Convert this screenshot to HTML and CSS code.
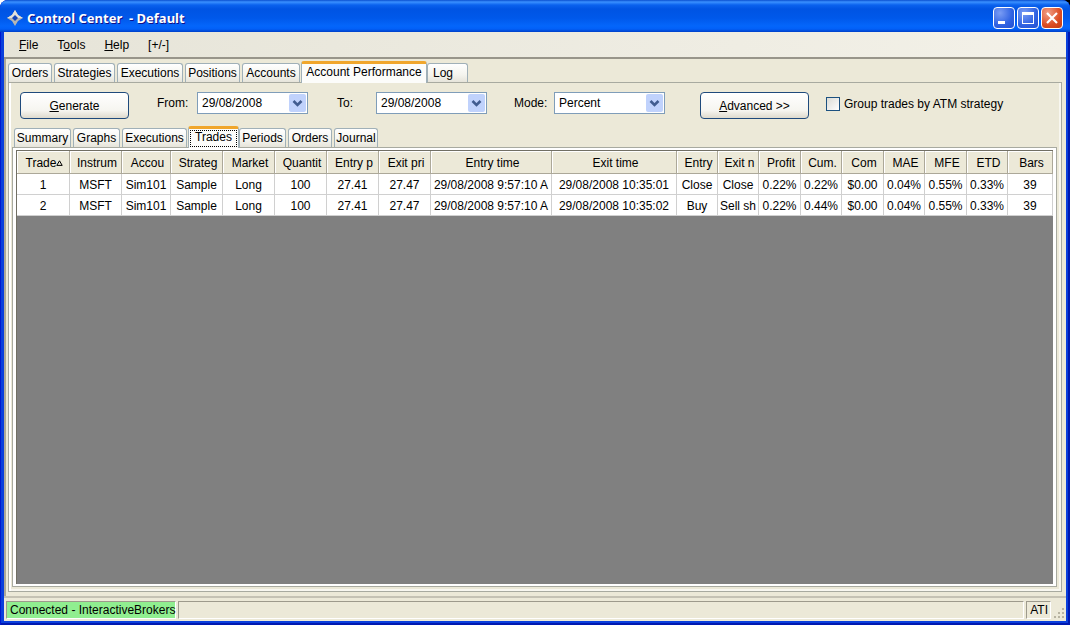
FILE: index.html
```html
<!DOCTYPE html>
<html lang="en">
<head>
    <meta charset="UTF-8">
    <meta name="viewport" content="width=device-width, initial-scale=1.0">
    <title>Control Center - Default</title>
    <link rel="stylesheet" href="styles.css">
</head>
<body>
    <div class="window">
        <header class="titlebar">
            <svg class="logo" width="16" height="16" viewBox="0 0 16 16">
                <path d="M8 0 L11 5 L16 8 L11 11 L8 16 L5 11 L0 8 L5 5 Z" fill="#b4b6b4"/>
                <path d="M8 0 L11 5 L16 8 L8 8 L0 8 L5 5 Z" fill="#e2e2dc"/>
                <path d="M8 5 L11 8 L8 11 L5 8 Z" fill="#1546b8"/>
            </svg>
            <h1>Control Center&nbsp; - Default</h1>
            <div class="window-buttons">
                <button type="button" class="win-btn" aria-label="Minimize">
                    <svg width="20" height="20" viewBox="0 0 20 20"><path d="M4 13h7v3H4z" fill="#fff"/></svg>
                </button>
                <button type="button" class="win-btn" aria-label="Maximize">
                    <svg width="20" height="20" viewBox="0 0 20 20"><path d="M4 4h12v12H4zM5 7v8h10V7z" fill="#fff" fill-rule="evenodd"/></svg>
                </button>
                <button type="button" class="win-btn close" aria-label="Close">
                    <svg width="20" height="20" viewBox="0 0 20 20"><path d="M5 5l10 10M15 5L5 15" stroke="#fff" stroke-width="2.2"/></svg>
                </button>
            </div>
        </header>

        <div class="client">
            <nav class="menubar">
                <button type="button"><u>F</u>ile</button>
                <button type="button">T<u>o</u>ols</button>
                <button type="button"><u>H</u>elp</button>
                <button type="button">[+/-]</button>
            </nav>

            <main class="workspace">
                <div class="tabs main-tabs" role="tablist">
                    <button type="button" role="tab" class="tab">Orders</button>
                    <button type="button" role="tab" class="tab">Strategies</button>
                    <button type="button" role="tab" class="tab">Executions</button>
                    <button type="button" role="tab" class="tab">Positions</button>
                    <button type="button" role="tab" class="tab">Accounts</button>
                    <button type="button" role="tab" class="tab active" aria-selected="true">Account Performance</button>
                    <button type="button" role="tab" class="tab log">Log</button>
                </div>

                <section class="panel">
                    <form class="toolbar">
                        <button type="button" class="btn"><u>G</u>enerate</button>
                        <div class="field from">
                            <label for="from">From:</label>
                            <select id="from"><option>29/08/2008</option></select>
                        </div>
                        <div class="field to">
                            <label for="to">To:</label>
                            <select id="to"><option>29/08/2008</option></select>
                        </div>
                        <div class="field mode">
                            <label for="mode">Mode:</label>
                            <select id="mode"><option>Percent</option></select>
                        </div>
                        <button type="button" class="btn advanced"><u>A</u>dvanced &gt;&gt;</button>
                        <div class="check">
                            <input type="checkbox" id="group">
                            <label for="group">Group trades by ATM strategy</label>
                        </div>
                    </form>

                    <div class="tabs sub-tabs" role="tablist">
                        <button type="button" role="tab" class="tab">Summary</button>
                        <button type="button" role="tab" class="tab">Graphs</button>
                        <button type="button" role="tab" class="tab">Executions</button>
                        <button type="button" role="tab" class="tab active focused" aria-selected="true"><span>Trades</span></button>
                        <button type="button" role="tab" class="tab">Periods</button>
                        <button type="button" role="tab" class="tab">Orders</button>
                        <button type="button" role="tab" class="tab">Journal</button>
                    </div>

                    <div class="grid-frame">
                        <div class="grid">
                            <table>
                                <colgroup>
                                    <col class="c-trade">
                                    <col class="c-mid">
                                    <col class="c-account">
                                    <col class="c-mid" span="5">
                                    <col class="c-entry-time">
                                    <col class="c-exit-time">
                                    <col class="c-small" span="2">
                                    <col class="c-wide">
                                    <col class="c-small">
                                    <col class="c-wide">
                                    <col class="c-small">
                                    <col class="c-wide">
                                    <col class="c-small">
                                    <col>
                                </colgroup>
                                <thead>
                                    <tr>
                                        <th>Trade<svg class="sort" width="7" height="6" viewBox="0 0 7 6"><path d="M3.5 .8L6.2 5.4H.8z" fill="none" stroke="#000"/></svg></th>
                                        <th>Instrum</th>
                                        <th>Accou</th>
                                        <th>Strateg</th>
                                        <th>Market</th>
                                        <th>Quantit</th>
                                        <th>Entry p</th>
                                        <th>Exit pri</th>
                                        <th>Entry time</th>
                                        <th>Exit time</th>
                                        <th>Entry</th>
                                        <th>Exit n</th>
                                        <th>Profit</th>
                                        <th>Cum.</th>
                                        <th>Com</th>
                                        <th>MAE</th>
                                        <th>MFE</th>
                                        <th>ETD</th>
                                        <th>Bars</th>
                                    </tr>
                                </thead>
                                <tbody>
                                    <tr>
                                        <td>1</td>
                                        <td>MSFT</td>
                                        <td>Sim101</td>
                                        <td>Sample</td>
                                        <td>Long</td>
                                        <td>100</td>
                                        <td>27.41</td>
                                        <td>27.47</td>
                                        <td>29/08/2008 9:57:10 A</td>
                                        <td>29/08/2008 10:35:01</td>
                                        <td>Close</td>
                                        <td>Close</td>
                                        <td>0.22%</td>
                                        <td>0.22%</td>
                                        <td>$0.00</td>
                                        <td>0.04%</td>
                                        <td>0.55%</td>
                                        <td>0.33%</td>
                                        <td>39</td>
                                    </tr>
                                    <tr>
                                        <td>2</td>
                                        <td>MSFT</td>
                                        <td>Sim101</td>
                                        <td>Sample</td>
                                        <td>Long</td>
                                        <td>100</td>
                                        <td>27.41</td>
                                        <td>27.47</td>
                                        <td>29/08/2008 9:57:10 A</td>
                                        <td>29/08/2008 10:35:02</td>
                                        <td>Buy</td>
                                        <td>Sell sh</td>
                                        <td>0.22%</td>
                                        <td>0.44%</td>
                                        <td>$0.00</td>
                                        <td>0.04%</td>
                                        <td>0.55%</td>
                                        <td>0.33%</td>
                                        <td>39</td>
                                    </tr>
                                </tbody>
                            </table>
                        </div>
                    </div>
                </section>
            </main>

            <footer class="statusbar">
                <div class="status connected">Connected - InteractiveBrokers</div>
                <div class="status message"></div>
                <div class="status">ATI</div>
                <svg class="grip" width="12" height="12" viewBox="0 0 12 12">
                    <path d="M9 1h2v2H9zM5 5h2v2H5zM9 5h2v2H9zM1 9h2v2H1zM5 9h2v2H5zM9 9h2v2H9z" fill="#b8b4a2"/>
                </svg>
            </footer>
        </div>
    </div>
</body>
</html>
```
FILE: styles.css
```css
* {
    box-sizing: border-box;
}
body {
    margin: 0;
    background: linear-gradient(to right, #fff 50%, #000 50%);
    font-family: "Liberation Sans", Arial, sans-serif;
    font-size: 12px;
    line-height: 16px;
    color: #000;
}
button, select, input {
    font: inherit;
    color: inherit;
    margin: 0;
}
h1 {
    margin: 0;
}

/* window */
.window {
    display: flex;
    flex-direction: column;
    height: 100vh;
    padding: 0 4px 4px;
    background: #0a3fdc;
    border-radius: 8px 8px 0 0;
    overflow: hidden;
    box-shadow: inset 1px 0 #0019cf, inset -2px -2px #0019b0;
}
.titlebar {
    display: flex;
    align-items: center;
    gap: 4px;
    height: 32px;
    margin: 0 -4px;
    padding: 3px 7px 0;
    background: linear-gradient(#0a4fd0 0, #3a90ff 2px, #0a62ee 5px, #0054e3 9px, #0058ea 18px, #0466fb 26px, #0260f8 29px, #0040c8 32px);
}
.titlebar h1 {
    flex: 1;
    font-family: "Noto Sans", sans-serif;
    font-size: 13px;
    color: #fff;
    text-shadow: 1px 1px #0f1089;
}
.window-buttons {
    display: flex;
    gap: 2px;
}
.win-btn {
    display: flex;
    width: 22px;
    height: 22px;
    padding: 0;
    border: 1px solid #fff;
    border-radius: 4px;
    background: radial-gradient(circle at 30% 25%, #7a9cf4, #2f62e2 60%, #2450d0);
}
.win-btn.close {
    background: radial-gradient(circle at 30% 25%, #f0a088, #dc4c22 60%, #c03c14);
}
.client {
    flex: 1;
    display: flex;
    flex-direction: column;
    background: #ece9d8;
}

/* menu */
.menubar {
    display: flex;
    gap: 19px;
    height: 27px;
    padding: 0 15px;
    background: linear-gradient(to right, #e6e4d8, #f3f1e8);
    border-bottom: 2px solid #98958a;
}
.menubar button {
    padding: 0;
    border: 0;
    background: none;
}

/* tabs */
.workspace {
    flex: 1;
    display: flex;
    flex-direction: column;
    padding: 2px 4px 4px 2px;
    border-left: 2px solid #aca899;
}
.tabs {
    display: grid;
    align-items: end;
    height: 21px;
}
.main-tabs {
    grid-template-columns: 46px 63px 68px 57px 60px 125px 41px;
}
.sub-tabs {
    grid-template-columns: 59px 49px 67px 50px 49px 46px 46px;
    padding-left: 2px;
}
.tab {
    height: 19px;
    margin-right: 2px;
    padding: 0;
    border: 1px solid #a0b0b8;
    border-bottom: 0;
    border-radius: 3px 3px 0 0;
    background: linear-gradient(#fff, #f4f4ee 60%, #e6e4da);
    white-space: nowrap;
}
.tab.active {
    z-index: 1;
    height: 22px;
    margin: 0 0 -1px -1px;
    padding-bottom: 3px;
    border-top: 3px solid #f0a62c;
    background: #fcfcfa;
}
.tab.log {
    margin: 0;
    padding-left: 5px;
    text-align: left;
}
.tab.focused {
    padding: 0 1px 1px;
}
.tab.focused span {
    display: block;
    height: 17px;
    border: 1px dotted #000;
    line-height: 13px;
}

/* toolbar */
.panel {
    flex: 1;
    display: flex;
    flex-direction: column;
    padding: 0 4px 4px 3px;
    border: 1px solid #a8aaa0;
    box-shadow: inset 2px 0 #fff, inset -2px -2px #f8f7f0;
}
.toolbar {
    display: flex;
    height: 43px;
    padding: 9px 0 0 8px;
}
.btn {
    width: 109px;
    height: 27px;
    padding: 0;
    border: 1px solid #1f4a7c;
    border-radius: 4px;
    background: linear-gradient(#fff, #f6f5f0 70%, #dedacd);
}
.field {
    display: flex;
    align-items: center;
    justify-content: space-between;
    height: 22px;
}
.from {
    width: 151px;
    margin-left: 28px;
}
.to {
    width: 150px;
    margin-left: 29px;
}
.mode {
    width: 151px;
    margin-left: 27px;
}
.field select {
    appearance: none;
    width: 111px;
    height: 22px;
    padding: 0 4px;
    border: 1px solid #7f9db9;
    border-radius: 0;
    background: #fff url("data:image/svg+xml,%3Csvg xmlns='http://www.w3.org/2000/svg' width='17' height='18'%3E%3Crect width='17' height='18' rx='2' fill='%23c0d2fc'/%3E%3Cpath d='M4.5 7l4 4 4-4' fill='none' stroke='%23415c90' stroke-width='2.6'/%3E%3C/svg%3E") right 1px center no-repeat;
}
.advanced {
    margin-left: 35px;
}
.check {
    display: flex;
    align-items: center;
    gap: 4px;
    height: 24px;
    margin-left: 17px;
    white-space: nowrap;
}
.check input {
    appearance: none;
    width: 14px;
    height: 14px;
    border: 1px solid #1c5180;
    background: linear-gradient(135deg, #dcdcd6, #fff);
}

/* trades grid */
.grid-frame {
    flex: 1;
    display: flex;
    padding: 2px 3px;
    border: 1px solid #a8aaa0;
    background: #fff;
}
.grid {
    flex: 1;
    min-width: 0;
    border: 1px solid #716f64;
    border-width: 1px 0 0 1px;
    background: #808080;
}
table {
    width: 100%;
    table-layout: fixed;
    border-collapse: separate;
    border-spacing: 0;
}
th, td {
    padding: 0;
    text-align: center;
    font-weight: normal;
    white-space: nowrap;
    overflow: hidden;
}
th {
    height: 23px;
    padding: 2px 0 0 3px;
    background: #ece9d8;
    border-right: 1px solid #aca899;
    border-bottom: 1px solid #aca899;
    box-shadow: inset 1px 1px #fff;
}
td {
    height: 21px;
    padding-top: 1px;
    background: #fff;
    border-right: 1px solid #d0d0d0;
    border-bottom: 1px solid #d0d0d0;
}
.sort {
    vertical-align: 1px;
}
.c-trade {
    width: 53px;
}
.c-mid {
    width: 52px;
}
.c-account {
    width: 49px;
}
.c-entry-time {
    width: 121px;
}
.c-exit-time {
    width: 125px;
}
.c-small {
    width: 41px;
}
.c-wide {
    width: 42px;
}

/* status bar */
.statusbar {
    display: flex;
    gap: 2px;
    height: 25px;
    padding: 3px 1px 2px 2px;
    border-top: 2px solid #c5c2b4;
}
.status {
    padding: 0 2px 0 3px;
    border: 1px solid #fff;
    border-top-color: #9d9a8c;
    border-left-color: #9d9a8c;
    white-space: nowrap;
}
.connected {
    padding-right: 0;
    background: #90ee90;
}
.message {
    flex: 1;
}
.grip {
    align-self: flex-end;
}
```
